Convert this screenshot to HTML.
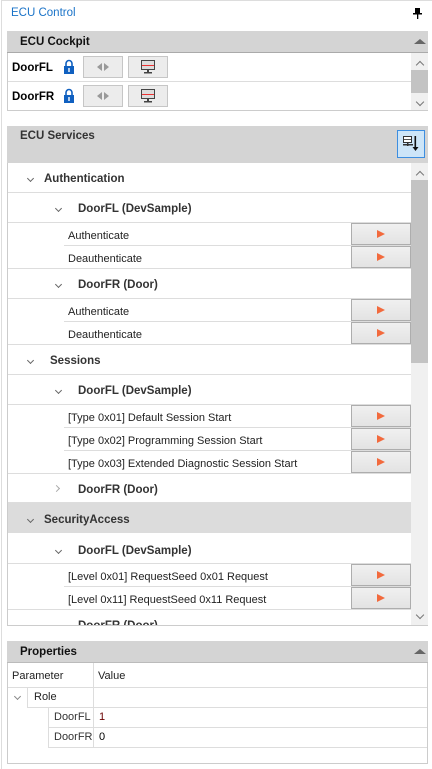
<!DOCTYPE html>
<html><head><meta charset="utf-8"><style>
*{box-sizing:border-box;margin:0;padding:0}
body{width:432px;height:769px;background:#fff;font-family:"Liberation Sans",sans-serif;font-size:11px;color:#222;position:relative;overflow:hidden}
.a{position:absolute}
.t{margin-top:2px}
.hd{background:#d4d4d4;font-weight:bold;color:#111;font-size:11.5px}
.b{font-weight:bold;color:#333;font-size:11.5px;margin-top:2px}
.line{position:absolute;height:1px;background:#ddd}
.btn{position:absolute;left:351px;width:60px;height:22px;background:linear-gradient(#f0f0f0,#e3e3e3);border:1px solid #adadad}
.btn:after{content:"";position:absolute;left:25px;top:6px;border-left:8px solid #f26a3d;border-top:4.5px solid transparent;border-bottom:4.5px solid transparent}
.chev{position:absolute;width:5px;height:5px;border-right:1px solid #666;border-bottom:1px solid #666;transform:rotate(45deg)}
.chr{position:absolute;width:5px;height:5px;border-right:1px solid #aaa;border-bottom:1px solid #aaa;transform:rotate(-45deg)}
.up{position:absolute;width:6px;height:6px;border-left:1px solid #777;border-top:1px solid #777;transform:rotate(45deg)}
.dn{position:absolute;width:6px;height:6px;border-right:1px solid #777;border-bottom:1px solid #777;transform:rotate(45deg)}
.cb{position:absolute;width:40px;height:22px;background:#ececec;border:1px solid #c6c6c6}
</style></head><body>
<div class="a" style="left:1px;top:0;width:431px;height:1px;background:#ddd"></div>
<div class="a" style="left:1px;top:0;width:1px;height:769px;background:#ddd"></div>
<div class="a" style="left:11px;top:7px;color:#1a73c8;font-size:11.5px">ECU Control</div>
<svg class="a" style="left:413px;top:8px" width="9" height="11"><rect x="2" y="0" width="5" height="5" fill="#000"/><rect x="0" y="5" width="9" height="1.5" fill="#000"/><rect x="4" y="6" width="1.3" height="5" fill="#000"/></svg>

<!-- ECU Cockpit -->
<div class="a hd" style="left:7px;top:31px;width:421px;height:22px;border-bottom:1px solid #aaa;padding:5px 13px">ECU Cockpit</div>
<div class="a" style="left:414px;top:39px;border-bottom:5px solid #666;border-left:6px solid transparent;border-right:6px solid transparent"></div>
<div class="a" style="left:7px;top:53px;width:421px;height:58px;border:1px solid #ccc;border-top:none"></div>
<div class="line" style="left:8px;top:81px;width:403px"></div>
<div class="a" style="left:411px;top:53px;width:17px;height:57px;background:#f0f0f0"></div>
<div class="a" style="left:411px;top:70px;width:17px;height:23px;background:#c3c3c3"></div>
<div class="up" style="left:417px;top:62px"></div>
<div class="dn" style="left:417px;top:99px"></div>
<div class="a b" style="left:12px;top:60px;color:#000">DoorFL</div>
<div class="a b" style="left:12px;top:89px;color:#000">DoorFR</div>
<svg class="a" style="left:63px;top:59px" width="12" height="15"><path d="M3 7V4.5a3 3 0 0 1 6 0V7" stroke="#1060c0" stroke-width="1.6" fill="none"/><rect x="1" y="7" width="10" height="8" fill="#1060c0"/><rect x="5.3" y="9" width="1.4" height="4" fill="#fff"/></svg>
<svg class="a" style="left:63px;top:88px" width="12" height="15"><path d="M3 7V4.5a3 3 0 0 1 6 0V7" stroke="#1060c0" stroke-width="1.6" fill="none"/><rect x="1" y="7" width="10" height="8" fill="#1060c0"/><rect x="5.3" y="9" width="1.4" height="4" fill="#fff"/></svg>
<div class="cb" style="left:83px;top:56px"></div><div class="cb" style="left:128px;top:56px"></div>
<div class="cb" style="left:83px;top:85px"></div><div class="cb" style="left:128px;top:85px"></div>
<svg class="a" style="left:96px;top:63px" width="14" height="8"><path d="M6 0L1 4 6 8Z M8 0L13 4 8 8Z" fill="#999"/></svg>
<svg class="a" style="left:96px;top:92px" width="14" height="8"><path d="M6 0L1 4 6 8Z M8 0L13 4 8 8Z" fill="#999"/></svg>
<svg class="a" style="left:141px;top:60px" width="14" height="14"><rect x="0.5" y="0.5" width="13" height="9" fill="#ddd" stroke="#444"/><rect x="1" y="5" width="12" height="1" fill="#e33"/><rect x="6" y="10" width="2" height="2" fill="#444"/><rect x="3" y="12" width="8" height="1.5" fill="#444"/></svg>
<svg class="a" style="left:141px;top:89px" width="14" height="14"><rect x="0.5" y="0.5" width="13" height="9" fill="#ddd" stroke="#444"/><rect x="1" y="5" width="12" height="1" fill="#e33"/><rect x="6" y="10" width="2" height="2" fill="#444"/><rect x="3" y="12" width="8" height="1.5" fill="#444"/></svg>

<!-- ECU Services -->
<div class="a hd" style="left:7px;top:126px;width:421px;height:37px;padding:4px 13px;color:#333">ECU Services</div>
<div class="a" style="left:397px;top:130px;width:28px;height:28px;background:#cde5f8;border:1px solid #3d8ee0"></div>
<svg class="a" style="left:403px;top:136px" width="16" height="16"><rect x="0.5" y="0.5" width="8" height="6" fill="#fff" stroke="#333"/><rect x="1" y="3" width="7" height="1" fill="#555"/><rect x="0" y="8" width="10" height="1.5" fill="#333"/><rect x="4" y="7" width="1.5" height="3" fill="#333"/><rect x="11.5" y="0" width="1.6" height="12" fill="#111"/><path d="M9.5 11h6l-3 4z" fill="#111"/></svg>
<div class="a" style="left:7px;top:163px;width:421px;height:463px;border:1px solid #ccc;border-top:none"></div>
<div class="a" style="left:411px;top:163px;width:17px;height:462px;background:#f0f0f0"></div>
<div class="a" style="left:411px;top:180px;width:17px;height:183px;background:#c3c3c3"></div>
<div class="up" style="left:417px;top:172px"></div>
<div class="dn" style="left:417px;top:612px"></div>
<div class="a" style="left:8px;top:503px;width:403px;height:30px;background:#dcdcdc"></div>

<div class="chev" style="left:28px;top:176px"></div><div class="a b" style="left:44px;top:171px">Authentication</div>
<div class="line" style="left:8px;top:192px;width:403px"></div>
<div class="chev" style="left:56px;top:206px"></div><div class="a b" style="left:78px;top:201px">DoorFL (DevSample)</div>
<div class="line" style="left:8px;top:222px;width:403px"></div>
<div class="a t" style="left:68px;top:228px">Authenticate</div><div class="btn" style="top:223px"></div>
<div class="line" style="left:64px;top:245px;width:347px"></div>
<div class="a t" style="left:68px;top:251px">Deauthenticate</div><div class="btn" style="top:246px"></div>
<div class="line" style="left:8px;top:268px;width:403px"></div>
<div class="chev" style="left:56px;top:282px"></div><div class="a b" style="left:78px;top:277px">DoorFR (Door)</div>
<div class="line" style="left:8px;top:298px;width:403px"></div>
<div class="a t" style="left:68px;top:304px">Authenticate</div><div class="btn" style="top:299px"></div>
<div class="line" style="left:64px;top:321px;width:347px"></div>
<div class="a t" style="left:68px;top:327px">Deauthenticate</div><div class="btn" style="top:322px"></div>
<div class="line" style="left:8px;top:344px;width:403px"></div>
<div class="chev" style="left:28px;top:358px"></div><div class="a b" style="left:50px;top:353px">Sessions</div>
<div class="line" style="left:8px;top:374px;width:403px"></div>
<div class="chev" style="left:56px;top:388px"></div><div class="a b" style="left:78px;top:383px">DoorFL (DevSample)</div>
<div class="line" style="left:8px;top:404px;width:403px"></div>
<div class="a t" style="left:68px;top:410px">[Type 0x01] Default Session Start</div><div class="btn" style="top:405px"></div>
<div class="line" style="left:64px;top:427px;width:347px"></div>
<div class="a t" style="left:68px;top:433px">[Type 0x02] Programming Session Start</div><div class="btn" style="top:428px"></div>
<div class="line" style="left:64px;top:450px;width:347px"></div>
<div class="a t" style="left:68px;top:456px">[Type 0x03] Extended Diagnostic Session Start</div><div class="btn" style="top:451px"></div>
<div class="line" style="left:8px;top:473px;width:403px"></div>
<div class="chr" style="left:54px;top:486px"></div><div class="a b" style="left:78px;top:482px">DoorFR (Door)</div>
<div class="line" style="left:8px;top:502px;width:403px"></div>
<div class="chev" style="left:28px;top:517px"></div><div class="a b" style="left:44px;top:512px">SecurityAccess</div>
<div class="chev" style="left:56px;top:548px"></div><div class="a b" style="left:78px;top:543px">DoorFL (DevSample)</div>
<div class="line" style="left:8px;top:563px;width:403px"></div>
<div class="a t" style="left:68px;top:569px">[Level 0x01] RequestSeed 0x01 Request</div><div class="btn" style="top:564px"></div>
<div class="line" style="left:64px;top:586px;width:347px"></div>
<div class="a t" style="left:68px;top:592px">[Level 0x11] RequestSeed 0x11 Request</div><div class="btn" style="top:587px"></div>
<div class="line" style="left:8px;top:609px;width:403px"></div>
<div class="a" style="left:8px;top:610px;width:403px;height:15px;overflow:hidden"><div class="b" style="position:absolute;left:70px;top:8px">DoorFR (Door)</div></div>

<!-- Properties -->
<div class="a hd" style="left:7px;top:641px;width:421px;height:22px;border-bottom:1px solid #bbb;padding:5px 13px">Properties</div>
<div class="a" style="left:414px;top:649px;border-bottom:5px solid #666;border-left:6px solid transparent;border-right:6px solid transparent"></div>
<div class="a" style="left:7px;top:663px;width:421px;height:101px;border:1px solid #ccc;border-top:none"></div>
<div class="a t" style="left:12px;top:668px">Parameter</div><div class="a t" style="left:98px;top:668px">Value</div>
<div class="line" style="left:8px;top:687px;width:419px"></div>
<div class="a" style="left:93px;top:663px;width:1px;height:84px;background:#ddd"></div>
<div class="chev" style="left:15px;top:694px;border-color:#888"></div><div class="a t" style="left:34px;top:689px">Role</div>
<div class="a" style="left:27px;top:688px;width:1px;height:19px;background:#ddd"></div>
<div class="line" style="left:27px;top:707px;width:400px"></div>
<div class="a" style="left:48px;top:707px;width:1px;height:40px;background:#ddd"></div>
<div class="a t" style="left:54px;top:709px;color:#333">DoorFL</div><div class="a t" style="left:99px;top:709px;color:#6a0000">1</div>
<div class="line" style="left:48px;top:727px;width:379px"></div>
<div class="a t" style="left:54px;top:729px;color:#333">DoorFR</div><div class="a t" style="left:99px;top:729px;color:#000">0</div>
<div class="line" style="left:48px;top:747px;width:379px"></div>
</body></html>
